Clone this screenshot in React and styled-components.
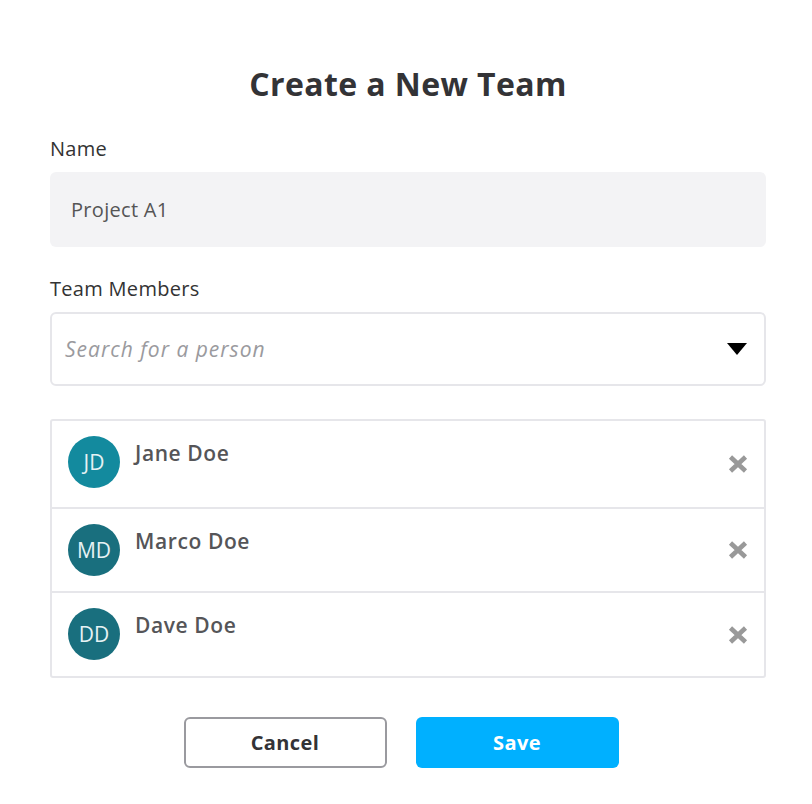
import React from "react";
import styled, { createGlobalStyle } from "styled-components";

const Global = createGlobalStyle`
  html, body { margin: 0; padding: 0; background: #fff; }
  body { font-family: "Open Sans", "Lato", sans-serif; color: #333; }
  * { box-sizing: border-box; }
`;

const Page = styled.div`
  width: 812px;
  padding: 64px 46px 0 50px;
  display: flex;
  flex-direction: column;
`;

const Title = styled.h1`
  margin: 0;
  font-size: 32px;
  line-height: 40px;
  font-weight: 700;
  letter-spacing: 0.4px;
  text-align: center;
  color: #333336;
`;

const Label = styled.label`
  display: block;
  font-size: 20px;
  line-height: 24px;
  letter-spacing: 0.3px;
  color: #333;
  margin-top: ${(p) => p.$top}px;
  margin-bottom: 11px;
`;

const NameInput = styled.div`
  height: 75px;
  border-radius: 6px;
  background: #f3f3f5;
  display: flex;
  align-items: center;
  padding-left: 21px;
  font-size: 20px;
  letter-spacing: 0.3px;
  color: #555;
`;

const Search = styled.div`
  height: 74px;
  border: 2px solid #e6e6ea;
  border-radius: 6px;
  display: flex;
  align-items: center;
  justify-content: space-between;
  padding: 0 17px 0 13px;
`;

const Placeholder = styled.span`
  font-size: 21px;
  font-style: italic;
  letter-spacing: 1px;
  color: #9a9a9e;
`;

const List = styled.div`
  margin-top: 33px;
  border: 2px solid #e6e6ea;
  border-radius: 3px;
  display: flex;
  flex-direction: column;
`;

const Row = styled.div`
  height: ${(p) => p.$h}px;
  display: flex;
  align-items: flex-start;
  padding: 15px 16px 0 16px;
  & + & { border-top: 2px solid #e6e6ea; }
`;

const Avatar = styled.div`
  width: 52px;
  height: 52px;
  border-radius: 50%;
  background: ${(p) => p.$bg};
  color: #e6f2f4;
  display: flex;
  align-items: center;
  justify-content: center;
  font-size: 21px;
  flex-shrink: 0;
`;

const MemberName = styled.div`
  margin-left: 15px;
  margin-top: 4px;
  font-size: 21px;
  line-height: 26px;
  font-weight: 600;
  letter-spacing: 0.6px;
  color: #555558;
  flex: 1;
`;

const Remove = styled.button`
  align-self: center;
  margin-top: -15px;
  border: 0;
  background: none;
  padding: 0;
  width: 21px;
  height: 20px;
  display: flex;
  align-items: center;
  justify-content: center;
  cursor: pointer;
`;

const Buttons = styled.div`
  margin-top: 39px;
  display: flex;
  justify-content: center;
  gap: 29px;
  padding-right: 14px;
`;

const Button = styled.button`
  width: 203px;
  height: 51px;
  border-radius: 6px;
  font-family: inherit;
  font-size: 20px;
  font-weight: 700;
  letter-spacing: 0.4px;
  cursor: pointer;
  border: ${(p) => (p.$primary ? "0" : "2px solid #9a9a9f")};
  background: ${(p) => (p.$primary ? "#00b0ff" : "#fff")};
  color: ${(p) => (p.$primary ? "#fff" : "#333336")};
`;

const members = [
  { initials: "JD", name: "Jane Doe", bg: "#138a9e", h: 86 },
  { initials: "MD", name: "Marco Doe", bg: "#196f7e", h: 84 },
  { initials: "DD", name: "Dave Doe", bg: "#196f7e", h: 85 },
];

const XIcon = () => (
  <svg width="20" height="18" viewBox="0 0 20 18">
    <path d="M2.5 2 L17.5 16 M17.5 2 L2.5 16" stroke="#999" strokeWidth="4.6" strokeLinecap="butt" />
  </svg>
);

export default function App() {
  return (
    <>
      <Global />
      <Page>
        <Title>Create a New Team</Title>
        <Label $top={33}>Name</Label>
        <NameInput>Project A1</NameInput>
        <Label $top={30}>Team Members</Label>
        <Search>
          <Placeholder>Search for a person</Placeholder>
          <svg width="20" height="12" viewBox="0 0 20 12">
            <polygon points="0,0 20,0 10,12" fill="#000" />
          </svg>
        </Search>
        <List>
          {members.map((m) => (
            <Row key={m.initials} $h={m.h}>
              <Avatar $bg={m.bg}>{m.initials}</Avatar>
              <MemberName>{m.name}</MemberName>
              <Remove aria-label="Remove"><XIcon /></Remove>
            </Row>
          ))}
        </List>
        <Buttons>
          <Button>Cancel</Button>
          <Button $primary>Save</Button>
        </Buttons>
      </Page>
    </>
  );
}
